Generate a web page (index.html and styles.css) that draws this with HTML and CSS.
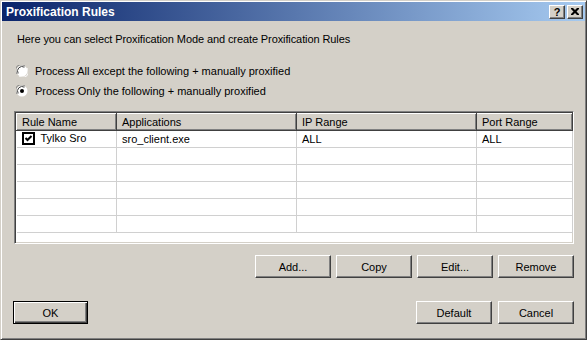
FILE: index.html
```html
<!DOCTYPE html>
<html lang="en">
<head>
	<meta charset="UTF-8">
	<title>Proxification Rules</title>
	<link rel="stylesheet" href="styles.css">
</head>
<body>
	<div class="window">
		<div class="titlebar">
			<span class="title">Proxification Rules</span>
			<span class="capbtn help">?</span>
			<span class="capbtn close">
				<svg width="8" height="7" viewBox="0 0 8 7"><path d="M0 0h2l2 2 2-2h2v1l-2.5 2.5L8 6v1H6L4 5 2 7H0V6l2.5-2.5L0 1z" fill="#000"/></svg>
			</span>
		</div>
		<div class="content">
			<p class="intro">Here you can select Proxification Mode and create Proxification Rules</p>
			<label class="radio">
				<svg width="12" height="12" viewBox="0 0 12 12"><circle cx="6" cy="6" r="5.5" fill="#fff"/><path d="M1.2 9A5.5 5.5 0 0 1 9 1.2" stroke="#808080" fill="none"/><path d="M2.2 8.4A4.5 4.5 0 0 1 8.4 2.2" stroke="#404040" fill="none"/><path d="M3 10.8A5.5 5.5 0 0 0 10.8 3" stroke="#fff" fill="none"/></svg>
				<span>Process All except the following + manually proxified</span>
			</label>
			<label class="radio">
				<svg width="12" height="12" viewBox="0 0 12 12"><circle cx="6" cy="6" r="5.5" fill="#fff"/><path d="M1.2 9A5.5 5.5 0 0 1 9 1.2" stroke="#808080" fill="none"/><path d="M2.2 8.4A4.5 4.5 0 0 1 8.4 2.2" stroke="#404040" fill="none"/><circle cx="6" cy="6" r="2" fill="#000"/></svg>
				<span>Process Only the following + manually proxified</span>
			</label>
			<div class="list">
				<table>
					<thead>
						<tr>
							<th class="c1">Rule Name</th>
							<th class="c2">Applications</th>
							<th class="c3">IP Range</th>
							<th class="c4">Port Range</th>
						</tr>
					</thead>
					<tbody>
						<tr>
							<td><span class="check"><svg width="13" height="13" viewBox="0 0 13 13"><rect x="1" y="1" width="11" height="11" fill="#fff" stroke="#000" stroke-width="2"/><path d="M3.5 6l2 2 4-4" stroke="#000" stroke-width="2" fill="none"/></svg></span>Tylko Sro</td>
							<td>sro_client.exe</td>
							<td>ALL</td>
							<td>ALL</td>
						</tr>
						<tr><td></td><td></td><td></td><td></td></tr>
						<tr><td></td><td></td><td></td><td></td></tr>
						<tr><td></td><td></td><td></td><td></td></tr>
						<tr><td></td><td></td><td></td><td></td></tr>
						<tr class="last"><td></td><td></td><td></td><td></td></tr>
					</tbody>
				</table>
			</div>
			<div class="actions">
				<button>Add...</button>
				<button>Copy</button>
				<button>Edit...</button>
				<button>Remove</button>
			</div>
			<div class="footer">
				<button class="default">OK</button>
				<span class="spacer"></span>
				<button>Default</button>
				<button>Cancel</button>
			</div>
		</div>
	</div>
</body>
</html>
```

FILE: styles.css
```css
*{padding: 0; margin: 0; box-sizing: border-box;}
body{font: 11px "Liberation Sans", Arial, sans-serif; color: #000; background: #d4d0c8;}
.window{
	width: 587px; height: 340px; display: flex; flex-direction: column;
	background: #d4d0c8; padding: 1px;
	border: 1px solid; border-color: #d4d0c8 #404040 #404040 #d4d0c8;
	box-shadow: inset 1px 1px #fff, inset -1px -1px #808080;
}
.titlebar{
	height: 19px; display: flex; align-items: center; padding: 0 2px 0 4px;
	background: linear-gradient(to right, #0a246a, #a6caf0);
}
.title{flex: 1; color: #fff; font-weight: bold; font-size: 12px;}
.capbtn{
	width: 16px; height: 14px; display: flex; align-items: center; justify-content: center;
	background: #d4d0c8; border: 1px solid; border-color: #fff #404040 #404040 #fff;
	box-shadow: inset -1px -1px #808080; font-weight: bold; font-size: 11px;
}
.capbtn.close{margin-left: 2px;}
.content{flex: 1; display: flex; flex-direction: column; padding: 12px 11px 0 12px;}
.intro{line-height: 13px; margin-left: 3px; letter-spacing: -0.1px;}
.radio{display: flex; align-items: center; gap: 7px; margin-left: 2px; height: 13px;}
.radio:first-of-type{margin-top: 18px;}
.radio + .radio{margin-top: 7px;}
.list{
	margin-top: 14px; height: 133px; background: #fff; overflow: hidden;
	border: 1px solid; border-color: #808080 #fff #fff #808080;
	box-shadow: inset 1px 1px #404040, inset -1px -1px #d4d0c8; padding: 1px;
}
.list table{border-collapse: collapse; table-layout: fixed; width: 556px;}
.list th{
	height: 17px; text-align: left; font-weight: normal; padding: 0 0 0 5px; background: #d4d0c8;
	border: 1px solid; border-color: #fff #404040 #404040 #fff; box-shadow: inset -1px -1px #808080;
}
.c1{width: 100px;}
.c2{width: 180px;}
.c3{width: 180px;}
.c4{width: 96px;}
.list td{height: 17px; padding: 0 0 0 5px; border-right: 1px solid #d0d0d0; border-bottom: 1px solid #d0d0d0; white-space: nowrap;}
.check{display: inline-block; vertical-align: -3px; margin-right: 6px;}
.actions{display: flex; justify-content: flex-end; gap: 5px; margin-top: 11px;}
.footer{display: flex; gap: 5px; margin-top: 23px;}
.spacer{flex: 1;}
button{
	width: 76px; height: 23px; font: 11px "Liberation Sans", Arial, sans-serif; color: #000;
	background: #d4d0c8; border: 1px solid; border-color: #fff #404040 #404040 #fff;
	box-shadow: inset -1px -1px #808080;
}
.footer button{margin-left: 1px;}
button.default{
	width: 75px; margin-left: -1px; border: 1px solid #000;
	box-shadow: inset 1px 1px #fff, inset -1px -1px #404040, inset -2px -2px #808080;
}
```
